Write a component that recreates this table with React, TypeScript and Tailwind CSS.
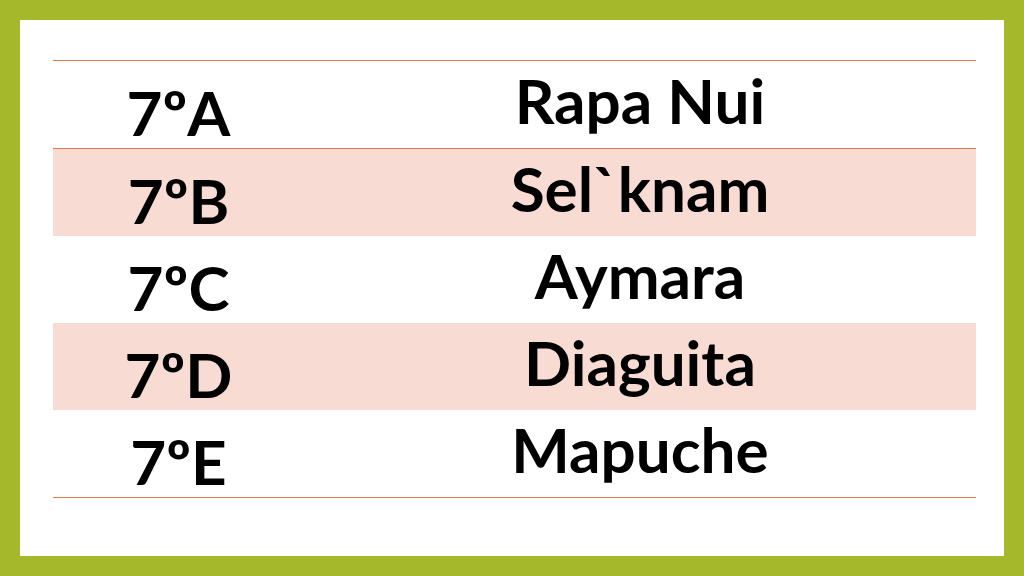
const rows = [
  { grade: "7ºA", name: "Rapa Nui" },
  { grade: "7ºB", name: "Sel`knam" },
  { grade: "7ºC", name: "Aymara" },
  { grade: "7ºD", name: "Diaguita" },
  { grade: "7ºE", name: "Mapuche" },
];

export default function App() {
  return (
    <div className="w-[1024px] h-[576px] bg-[#a5b82b] p-[20px] font-['Lato',sans-serif]">
      <div className="w-full h-full bg-white pt-[40px] pl-[33px] pr-[28px]">
        <div className="h-px bg-[#e0794f]" />
        {rows.map((row, i) => (
          <div key={row.grade}>
            <div
              className={`flex h-[87px] items-center text-black font-bold text-[62px] leading-none ${
                i % 2 === 1 ? "bg-[#f8dbd3]" : "bg-white"
              }`}
            >
              <div className="w-[251px] text-center pt-[14px]">{row.grade}</div>
              <div className="flex-1 text-center pb-[10px]">{row.name}</div>
            </div>
            {i === 0 && <div className="h-px bg-[#e0794f]" />}
          </div>
        ))}
        <div className="h-px bg-[#e0794f]" />
      </div>
    </div>
  );
}
